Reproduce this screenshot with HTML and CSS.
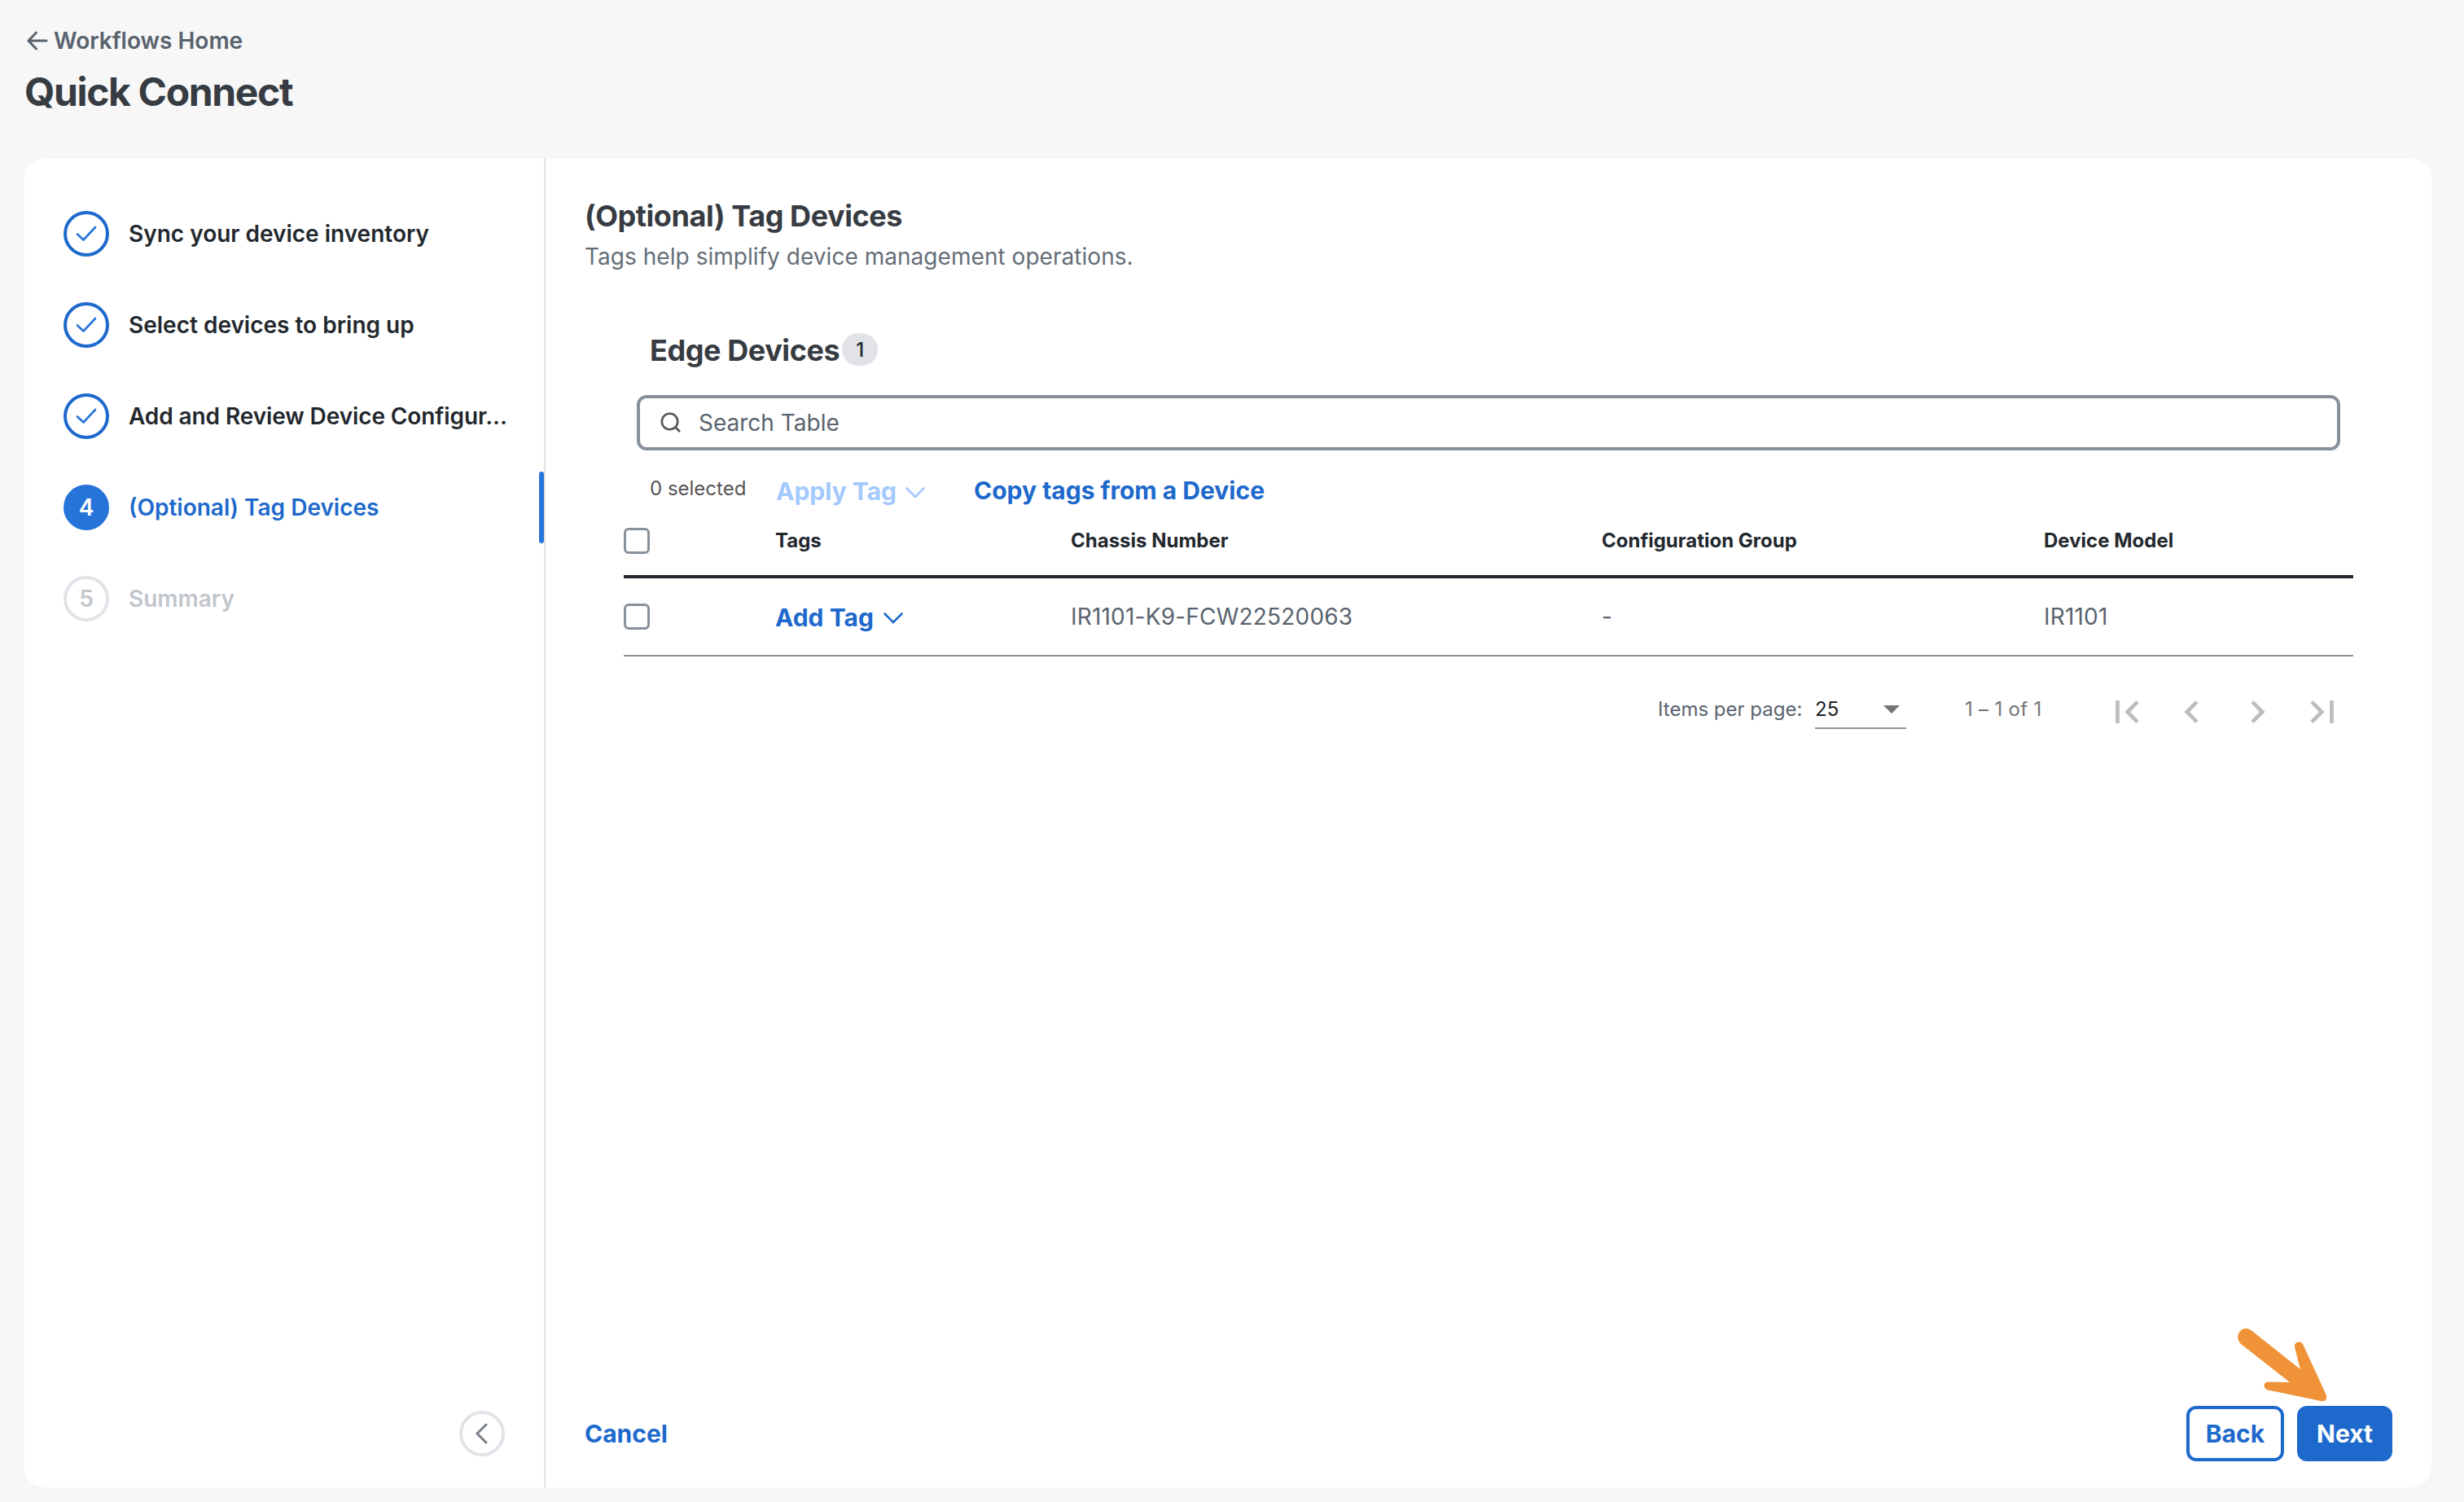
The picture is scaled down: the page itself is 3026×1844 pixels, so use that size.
FILE: index.html
```html
<!DOCTYPE html>
<html lang="en">
<head>
<meta charset="UTF-8">
<meta name="viewport" content="width=device-width, initial-scale=1.0">
<title>Quick Connect</title>
<link rel="stylesheet" href="styles.css">
</head>
<body>

<div class="page">
    <header>
        <a class="home-link">
            <svg class="back-arrow" width="26" height="24" viewBox="0 0 26 24"><path d="M24 12H2M11.500 2L2 12L11.500 22"/></svg>
            <span>Workflows Home</span>
        </a>
        <h1>Quick Connect</h1>
    </header>

    <div class="card">
        <!-- Workflow Steps -->
        <nav class="sidebar">
            <ul class="steps">
                <li class="step">
                    <span class="step-circle done"><svg width="26" height="20" viewBox="0 0 26 20"><path d="M2 10.500L9.500 17.500L24 2"/></svg></span>
                    <span class="step-label">Sync your device inventory</span>
                </li>
                <li class="step">
                    <span class="step-circle done"><svg width="26" height="20" viewBox="0 0 26 20"><path d="M2 10.500L9.500 17.500L24 2"/></svg></span>
                    <span class="step-label">Select devices to bring up</span>
                </li>
                <li class="step">
                    <span class="step-circle done"><svg width="26" height="20" viewBox="0 0 26 20"><path d="M2 10.500L9.500 17.500L24 2"/></svg></span>
                    <span class="step-label long">Add and Review Device Configur...</span>
                </li>
                <li class="step active">
                    <span class="step-circle">4</span>
                    <span class="step-label">(Optional) Tag Devices</span>
                </li>
                <li class="step pending">
                    <span class="step-circle">5</span>
                    <span class="step-label">Summary</span>
                </li>
            </ul>
            <button class="collapse-btn" aria-label="Collapse">
                <svg width="16" height="26" viewBox="0 0 16 26"><path d="M14 2L3 13L14 24"/></svg>
            </button>
        </nav>

        <main>
            <h2>(Optional) Tag Devices</h2>
            <p class="subtitle">Tags help simplify device management operations.</p>

            <section class="devices">
                <div class="devices-title">
                    <h3>Edge Devices</h3>
                    <span class="badge">1</span>
                </div>
                <div class="search-bar">
                    <svg width="28" height="28" viewBox="0 0 28 28"><circle cx="12.500" cy="12.500" r="9.700"/><path d="M19.500 19.500L25 25"/></svg>
                    <span class="search-placeholder">Search Table</span>
                </div>
                <div class="toolbar">
                    <span class="selected-count">0 selected</span>
                    <button class="link-btn apply-tag" disabled>Apply Tag <svg class="chevron" width="24" height="14" viewBox="0 0 24 14"><path d="M1.500 1.500L12 12L22.500 1.500"/></svg></button>
                    <button class="link-btn copy-tags">Copy tags from a Device</button>
                </div>

                <!-- Device Table -->
                <table>
                    <colgroup>
                        <col class="col-check">
                        <col class="col-tags">
                        <col class="col-chassis">
                        <col class="col-group">
                        <col class="col-model">
                    </colgroup>
                    <thead>
                        <tr>
                            <th><span class="checkbox"></span></th>
                            <th>Tags</th>
                            <th>Chassis Number</th>
                            <th>Configuration Group</th>
                            <th>Device Model</th>
                        </tr>
                    </thead>
                    <tbody>
                        <tr>
                            <td><span class="checkbox"></span></td>
                            <td><button class="link-btn add-tag">Add Tag <svg class="chevron" width="24" height="14" viewBox="0 0 24 14"><path d="M1.500 1.500L12 12L22.500 1.500"/></svg></button></td>
                            <td>IR1101-K9-FCW22520063</td>
                            <td>-</td>
                            <td>IR1101</td>
                        </tr>
                    </tbody>
                </table>

                <!-- Paginator -->
                <div class="paginator">
                    <span class="per-page">Items per page:</span>
                    <span class="page-select">25 <span class="caret"></span></span>
                    <span class="range">1 – 1 of 1</span>
                    <div class="page-icons">
                        <svg width="29" height="28" viewBox="0 0 29 28"><path d="M2.500 0V28M27 1.700L14.700 14L27 26.300"/></svg>
                        <svg width="17" height="28" viewBox="0 0 17 28"><path d="M15 1.700L2.700 14L15 26.300"/></svg>
                        <svg class="next-page" width="17" height="28" viewBox="0 0 17 28"><path d="M2 1.700L14.300 14L2 26.300"/></svg>
                        <svg width="29" height="28" viewBox="0 0 29 28"><path d="M2 1.700L14.300 14L2 26.300M26.500 0V28"/></svg>
                    </div>
                </div>
            </section>

            <div class="footer">
                <button class="link-btn">Cancel</button>
                <div class="footer-right">
                    <button class="btn">Back</button>
                    <button class="btn primary">Next</button>
                    <!-- Arrow pointing at the Next button -->
                    <svg class="pointer" width="114" height="94" viewBox="0 0 114 94"><path d="M19 4.500L79 52L72 25C71 18 80 16 82.500 22L110.500 83C113 89 109 92.500 104 91L39 77.500C32 75 34 67 39.500 67.500L66 68L6 21C-4 11 8 -4 19 4.500Z"/></svg>
                </div>
            </div>
        </main>
    </div>
</div>

</body>
</html>
```
FILE: styles.css
```css
/* Basic Styles */
* {
    box-sizing: border-box;
}
body {
    font-family: Inter, sans-serif;
    font-size: 28px;
    margin: 0;
    background-color: #f7f7f7;
    color: #23282e;
}
h1, h2, h3, p, ul {
    margin: 0;
    padding: 0;
}
svg {
    display: block;
    fill: none;
    stroke: currentColor;
    flex-shrink: 0;
    overflow: visible;
}
button {
    font-family: inherit;
    margin: 0;
    padding: 0;
    border: none;
    background: none;
    cursor: pointer;
}
.page {
    display: flex;
    flex-direction: column;
    height: 1844px;
    padding: 30px 40px 18px 30px;
}
/* Header Styles */
header {
    height: 165px;
}
.home-link {
    display: flex;
    align-items: center;
    gap: 7px;
    padding-left: 3px;
    line-height: 40px;
    font-weight: 600;
    color: #59636e;
}
.back-arrow {
    stroke-width: 3;
    stroke-linecap: round;
    stroke-linejoin: round;
}
h1 {
    margin-top: 13px;
    font-size: 48px;
    line-height: 60px;
    font-weight: 700;
    letter-spacing: -1.350px;
    color: #373c42;
}
.card {
    display: flex;
    flex: 1;
    background-color: #fff;
    border-radius: 24px;
}
/* Sidebar Styles */
.sidebar {
    display: flex;
    flex-direction: column;
    justify-content: space-between;
    width: 640px;
    padding: 48px 0 38px;
    border-right: 2px solid #e1e3e8;
}
.steps {
    display: flex;
    flex-direction: column;
    gap: 24px;
    list-style: none;
}
.step {
    position: relative;
    display: flex;
    align-items: center;
    gap: 24px;
    height: 88px;
    padding: 0 40px 0 48px;
    font-weight: 600;
}
.step-circle {
    display: flex;
    align-items: center;
    justify-content: center;
    flex-shrink: 0;
    width: 56px;
    height: 56px;
    border: 4px solid #1d69cc;
    border-radius: 50%;
    color: #2774d9;
}
.step-circle svg {
    stroke-width: 2.600;
    stroke-linecap: round;
    stroke-linejoin: round;
}
.step-label {
    line-height: 40px;
    white-space: nowrap;
}
.long {
    letter-spacing: -0.100px;
}
.active {
    color: #1d69cc;
}
.active .step-circle {
    background-color: #2774d9;
    border-color: #2774d9;
    color: #fff;
}
.active::after {
    content: "";
    position: absolute;
    top: 0;
    right: 0;
    width: 6px;
    height: 88px;
    border-radius: 3px;
    background-color: #2774d9;
}
.pending, .pending .step-circle {
    color: #c1c6cc;
}
.pending .step-circle {
    border-color: #e1e3e8;
}
.collapse-btn {
    display: flex;
    align-items: center;
    justify-content: center;
    align-self: flex-end;
    width: 56px;
    height: 56px;
    margin-right: 48px;
    padding-right: 3px;
    border: 4px solid #e1e3e8;
    border-radius: 50%;
    color: #7a838c;
}
.collapse-btn svg {
    stroke-width: 3;
    stroke-linecap: round;
}
/* Main Content */
main {
    display: flex;
    flex-direction: column;
    flex: 1;
    padding: 48px 48px 32px;
}
h2, h3 {
    font-size: 36px;
    line-height: 44px;
    font-weight: 700;
    letter-spacing: -0.420px;
    color: #373c42;
}
.subtitle {
    margin-top: 8px;
    line-height: 40px;
    letter-spacing: 0.040px;
    color: #656e78;
}
.devices {
    padding: 73px 48px 0;
}
.devices-title {
    display: flex;
    align-items: center;
    gap: 3px;
    height: 44px;
    padding-left: 32px;
}
.badge {
    width: 44px;
    height: 40px;
    margin-bottom: 2px;
    border-radius: 20px;
    background-color: #e1e3e8;
    font-size: 24px;
    line-height: 41px;
    font-weight: 500;
    text-align: center;
}
.search-bar {
    display: flex;
    align-items: center;
    gap: 20px;
    height: 68px;
    margin: 33px 16px 0;
    padding: 0 24px;
    border: 4px solid #889099;
    border-radius: 12px;
}
.search-bar svg {
    color: #555;
    stroke-width: 2.6;
}
.search-placeholder {
    color: #59636e;
}
.toolbar {
    display: flex;
    align-items: center;
    height: 48px;
    margin-top: 25px;
    padding-left: 32px;
}
.selected-count {
    width: 155px;
    padding-bottom: 5px;
    font-size: 24px;
    color: #555;
}
.link-btn {
    display: flex;
    align-items: center;
    gap: 12px;
    font-size: 30px;
    line-height: 40px;
    font-weight: 700;
    color: #1d69cc;
}
.chevron {
    margin-top: 3px;
    stroke-width: 2.6;
    stroke-linecap: round;
    stroke-linejoin: round;
}
.apply-tag {
    gap: 11px;
    width: 243px;
    padding-top: 2px;
    color: #a3c9ff;
}
/* Table Styles */
table {
    width: 2124px;
    table-layout: fixed;
    border-collapse: separate;
    border-spacing: 0;
}
.col-check {
    width: 186px;
}
.col-tags {
    width: 363px;
}
.col-chassis {
    width: 652px;
}
.col-group {
    width: 543px;
}
.col-model {
    width: 380px;
}
th, td {
    padding: 0;
    text-align: left;
    vertical-align: middle;
}
th {
    height: 84px;
    padding-bottom: 5px;
    border-bottom: 4px solid #23282e;
    font-size: 24px;
    font-weight: 700;
}
td {
    height: 96px;
    border-bottom: 2px solid #889099;
    letter-spacing: 0.200px;
    color: #59636e;
}
.checkbox {
    display: block;
    width: 32px;
    height: 32px;
    border: 3px solid #889099;
    border-radius: 6px;
}
.add-tag {
    padding-top: 1px;
}
/* Paginator Styles */
.paginator {
    display: flex;
    align-items: center;
    height: 50px;
    margin-top: 42px;
    padding-left: 1270px;
    font-size: 24px;
    color: #59636e;
}
.per-page {
    width: 193px;
    padding-bottom: 6px;
}
.page-select {
    display: flex;
    align-items: center;
    justify-content: space-between;
    width: 112px;
    height: 44px;
    padding: 0 8px 4px 0;
    border-bottom: 2px solid #949494;
    color: #222;
}
.caret {
    margin-top: 2px;
    border: 10px solid transparent;
    border-top-color: #757575;
    border-bottom: none;
}
.range {
    width: 257px;
    padding: 0 0 6px 72px;
    letter-spacing: 0.300px;
    white-space: nowrap;
    color: #757575;
}
.page-icons {
    display: flex;
    gap: 56px;
    padding-top: 2px;
    color: #bdbdbd;
}
.page-icons svg {
    stroke-width: 4.700;
}
.next-page {
    margin-left: 8px;
}
/* Footer Buttons */
.footer {
    display: flex;
    align-items: center;
    justify-content: space-between;
    margin-top: auto;
}
.footer-right {
    position: relative;
    display: flex;
    gap: 16px;
}
.btn {
    width: 120px;
    height: 68px;
    border: 4px solid #1d69cc;
    border-radius: 12px;
    font-size: 30px;
    font-weight: 700;
    color: #1d69cc;
}
.primary {
    width: 117px;
    background-color: #1d69cc;
    color: #fff;
}
.pointer {
    position: absolute;
    top: -97px;
    left: 61px;
    fill: #f09338;
    stroke: none;
}
```
